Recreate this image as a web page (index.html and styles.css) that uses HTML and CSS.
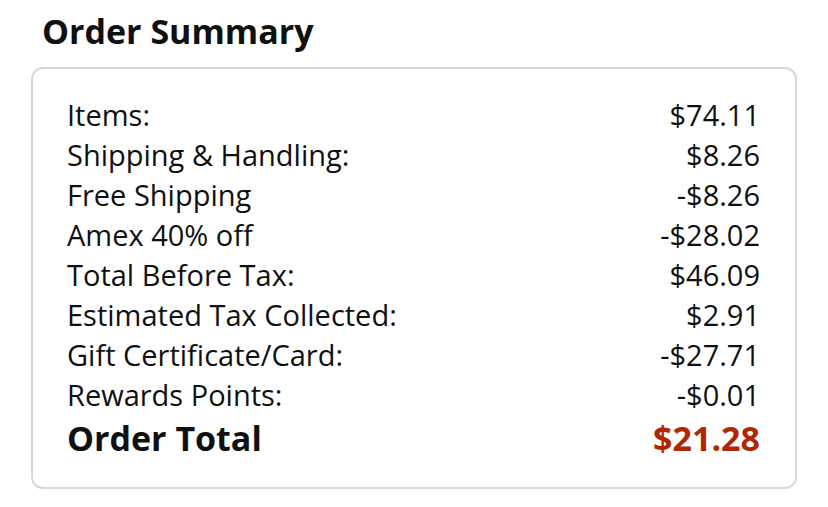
FILE: index.html
```html
<!DOCTYPE html>
<html>
<head>
<meta charset="utf-8">
<link rel="stylesheet" href="styles.css">
</head>
<body>
<div class="page">
  <h1 class="title">Order Summary</h1>
  <div class="box">
    <div class="row"><span>Items:</span><span>$74.11</span></div>
    <div class="row"><span>Shipping &amp; Handling:</span><span>$8.26</span></div>
    <div class="row"><span>Free Shipping</span><span>-$8.26</span></div>
    <div class="row"><span>Amex 40% off</span><span>-$28.02</span></div>
    <div class="row"><span>Total Before Tax:</span><span>$46.09</span></div>
    <div class="row"><span>Estimated Tax Collected:</span><span>$2.91</span></div>
    <div class="row"><span>Gift Certificate/Card:</span><span>-$27.71</span></div>
    <div class="row"><span>Rewards Points:</span><span>-$0.01</span></div>
    <div class="row total"><span>Order Total</span><span class="price">$21.28</span></div>
  </div>
</div>
</body>
</html>
```
FILE: styles.css
```css
html, body {
  margin: 0;
  background: #fff;
}
body {
  font-family: "Open Sans", "Noto Sans", sans-serif;
  color: #0f1111;
}
.page {
  padding: 8px 31px 0 31px;
  width: 766px;
}
.title {
  margin: 0 0 13px 11px;
  font-size: 34px;
  font-weight: 700;
  line-height: 46px;
}
.box {
  border: 2px solid #d5d9d9;
  border-radius: 12px;
  padding: 26px 35px 26px 34px;
}
.row {
  display: flex;
  justify-content: space-between;
  font-size: 29px;
  line-height: 40px;
}
.row.total {
  font-size: 34px;
  font-weight: 700;
  line-height: 46px;
}
.price {
  color: #b12704;
}
```
